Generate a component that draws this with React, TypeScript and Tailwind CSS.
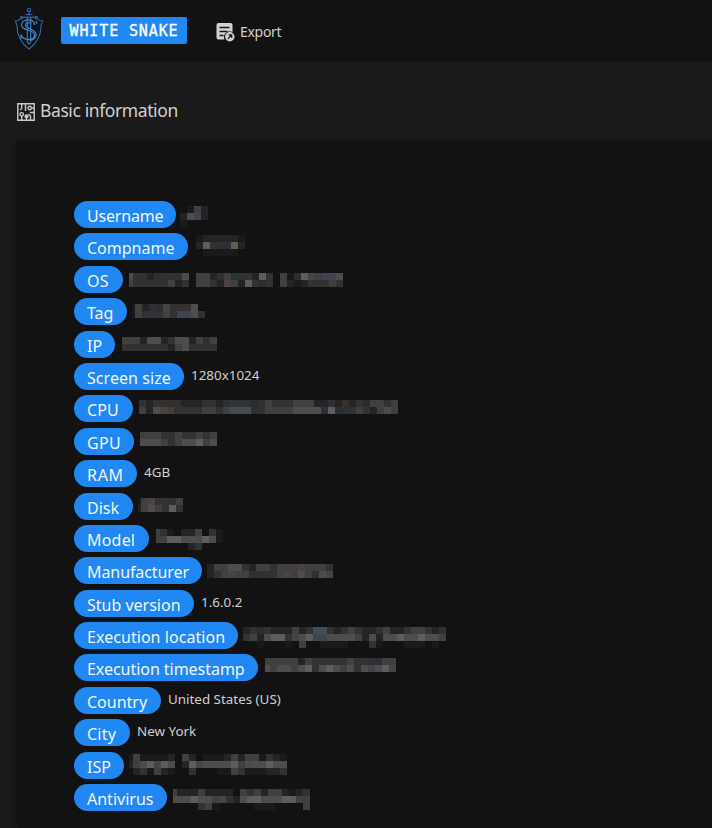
import React from "react";

type Mosaic = {
  gap: string;
  top: string;
  lead?: string;
  rows: string[];
};

type Row = {
  label: string;
  width: string;
  tracking?: string;
  value?: string;
  mosaic?: Mosaic;
};

const shades: Record<string, string> = {
  "0": "bg-transparent",
  "1": "bg-[#1b1b1b]",
  "2": "bg-[#272727]",
  "3": "bg-[#363636]",
  "4": "bg-[#454545]",
  "5": "bg-[#545454]",
  "6": "bg-[#666666]",
  b: "bg-[#30343c]",
  B: "bg-[#464a55]",
  t: "bg-[#2b3235]",
  T: "bg-[#4a5558]",
  r: "bg-[#3b3331]",
  R: "bg-[#534946]",
  y: "bg-[#39352f]",
  Y: "bg-[#676761]",
};

const rows: Row[] = [
  { label: "Username", width: "w-[102px]", tracking: "tracking-[-0.2px]", mosaic: { gap: "ml-[4px]", top: "mt-[5px]", rows: ["0142", "25B2", "1000"] } },
  { label: "Compname", width: "w-[114px]", mosaic: { gap: "ml-[8px]", top: "mt-[2px]", rows: ["1222221", "2Y3bbY2", "0111110"] } },
  { label: "OS", width: "w-[49px]", tracking: "tracking-[0.3px]", mosaic: { gap: "ml-[6px]", top: "mt-[7px]", lead: "w-[4px]", rows: ["T332b33350442r4b332Y3041t6R4BB5", "43333342304432R42Y3t30421233343"] } },
  { label: "Tag", width: "w-[53px]", mosaic: { gap: "ml-[5px]", top: "mt-[6px]", lead: "w-[3px]", rows: ["142btRbr350", "143334yBB5r"] } },
  { label: "IP", width: "w-[41px]", mosaic: { gap: "ml-[7px]", top: "mt-[6px]", lead: "w-[4px]", rows: ["44425523T524r4", "33333332453333"] } },
  { label: "Screen size", width: "w-[110px]", tracking: "tracking-[0.06px]", value: "1280x1024" },
  { label: "CPU", width: "w-[59px]", tracking: "tracking-[0.1px]", mosaic: { gap: "ml-[6px]", top: "mt-[5px]", rows: ["323yrr222332b333tr4y3344422b2r23t4434", "425R4333344b4TTTbb44445555b6tb34r2454"] } },
  { label: "GPU", width: "w-[60px]", tracking: "tracking-[0.3px]", mosaic: { gap: "ml-[6px]", top: "mt-[4px]", rows: ["4443343y434", "5554b455645"] } },
  { label: "RAM", width: "w-[63px]", tracking: "tracking-[0.7px]", value: "4GB" },
  { label: "Disk", width: "w-[59px]", mosaic: { gap: "ml-[5px]", top: "mt-[5px]", lead: "w-[3px]", rows: ["14R33b4", "2454363"] } },
  { label: "Model", width: "w-[75px]", tracking: "tracking-[0.2px]", mosaic: { gap: "ml-[7px]", top: "mt-[4px]", lead: "w-[4px]", rows: ["4310224031", "446655T651", "0000023000"] } },
  { label: "Manufacturer", width: "w-[128px]", tracking: "tracking-[-0.08px]", mosaic: { gap: "ml-[5px]", top: "mt-[7px]", rows: ["2445532443444R4443", "234R44bby34R454b5R"] } },
  { label: "Stub version", width: "w-[120px]", mosaic: undefined, value: "1.6.0.2" },
  { label: "Execution location", width: "w-[164px]", tracking: "tracking-[0.05px]", mosaic: { gap: "ml-[5px]", top: "mt-[5px]", rows: ["23t3222423TT3234322342234432b", "3425663R56BB55554252556556554", "00100010400111100031000111010"] } },
  { label: "Execution timestamp", width: "w-[184px]", tracking: "tracking-[-0.04px]", mosaic: { gap: "ml-[7px]", top: "mt-[4px]", lead: "w-[5px]", rows: ["4444424333334333b44", "545545635654535B56R"] } },
  { label: "Country", width: "w-[87px]", value: "United States (US)" },
  { label: "City", width: "w-[56px]", tracking: "tracking-[0.25px]", value: "New York" },
  { label: "ISP", width: "w-[50px]", mosaic: { gap: "ml-[5px]", top: "mt-[2px]", lead: "w-[4px]", rows: ["14111120420111242441321", "2456R65026R555564T55655", "02314210030001143111223"] } },
  { label: "Antivirus", width: "w-[93px]", mosaic: { gap: "ml-[6px]", top: "mt-[5px]", lead: "w-[4px]", rows: ["42224222204342442123", "5556554R325665556644", "00003410000011100004"] } },
];

function Redacted({ data }: { data: Mosaic }) {
  return (
    <div className={`${data.gap} ${data.top} flex flex-col opacity-90`}>
      {data.rows.map((line, y) => (
        <div key={y} className="flex h-[7px]">
          {line.split("").map((c, x) => (
            <span key={x} className={`h-full ${x === 0 && data.lead ? data.lead : "w-[7px]"} ${shades[c]}`} />
          ))}
        </div>
      ))}
    </div>
  );
}

function Logo() {
  return (
    <svg width="30" height="44" viewBox="0 0 30 44" fill="none" stroke="#2f6ba6" strokeWidth="1.1">
      <circle cx="15" cy="3" r="1.700" />
      <path d="M15 4.700v4M11.500 7.500h7" />
      <path d="M8.500 9.500H7c-.7 3-3 4.500-5.500 4.500.5 2.500 1.500 3 1.500 5C3 29 7 36 15 42c8-6 12-13 12-23 0-2 1-2.500 1.500-5-2.500 0-4.800-1.500-5.500-4.500h-1.500" />
      <path d="M8 10.200h14v2.500M8 10.200v2.500M13.300 11v24l1.700 2 1.700-2V11" stroke="#3880c8" />
      <path d="M20.500 18c0-3.500-3-5-6-5-4.500 0-7 2.300-7 5 0 6 13 4.500 13 10 0 3-3 4.500-6 4.500-4 0-6.500-2-7.500-5M22.500 17v-3M7 32v-4M17.500 16c-3.500-1-6 0-6 2 0 4 10.500 4 10.500 9.500 0 3-2 5-5 6" stroke="#3880c8" strokeWidth="1.3" />
    </svg>
  );
}

function ExportIcon() {
  return (
    <svg width="19" height="19" viewBox="0 0 19 19" fill="none">
      <path d="M2.500 0h12A2 2 0 0 1 16.500 2v7.200A5.700 5.700 0 0 0 8.500 16.500H2.500a2 2 0 0 1-2-2V2a2 2 0 0 1 2-2Z" fill="#d2d2d2" />
      <path d="M3.500 4.500h10M3.500 8.500h8M3.500 12.500h4" stroke="#151515" strokeWidth="1.700" />
      <circle cx="13.800" cy="13.800" r="4.700" fill="#d2d2d2" />
      <path d="m11.800 15.800 3.800-3.800M12.500 11.900h3.200v3.200" stroke="#151515" strokeWidth="1.200" />
    </svg>
  );
}

function CircuitIcon() {
  return (
    <svg width="18" height="18" viewBox="0 0 18 18" fill="none" stroke="#cbcbcb" strokeWidth="1.400">
      <path d="M.8.8h16.400v16.400H.8zM4.700 1v4.500L3 7M8.500 1v7M14.500 5H17M4.700 13v4M9.500 14v3M13.500 17v-4l-2-2M17 9.500h-4" />
      <circle cx="12.700" cy="5" r="1.700" />
      <circle cx="4.700" cy="11.300" r="1.700" />
      <circle cx="9.500" cy="13.300" r="1.400" fill="#cbcbcb" />
    </svg>
  );
}

export default function App() {
  return (
    <div className="flex h-[828px] w-[712px] flex-col overflow-hidden bg-[#1a1a1a] font-['Noto_Sans','Open_Sans',sans-serif] text-[#d0d0d0]">
      <header className="flex h-[62px] shrink-0 items-start bg-[#121212]">
        <div className="ml-[14px] mt-[7px]"><Logo /></div>
        <div className="ml-[17px] mt-[17px] flex h-[27px] w-[126px] items-center justify-center rounded-[2px] bg-[#2188f3] pt-[2px] font-['DejaVu_Sans_Mono',monospace] text-[15px] tracking-[0.87px] text-white [-webkit-text-stroke:0.35px_white]">
          <span className="whitespace-nowrap">WHITE SNAKE</span>
        </div>
        <div className="ml-[29px] mt-[23px] flex">
          <ExportIcon />
          <span className="-mt-[1px] ml-[5px] text-[14px] leading-[19px] tracking-[-0.3px]">Export</span>
        </div>
      </header>
      <div className="flex h-[79px] shrink-0 items-start pl-[17px] pt-[41px]">
        <CircuitIcon />
        <h1 className="-mt-[6px] ml-[5px] whitespace-nowrap text-[17.5px] leading-[26px] tracking-[-0.4px]">Basic information</h1>
      </div>
      <main className="ml-[17px] flex grow flex-col bg-[#121212] pl-[57px] pt-[60px] shadow-[0_0_5px_#121212]">
        {rows.map((row) => (
          <div key={row.label} className="flex h-[32.4px] shrink-0 items-start">
            <div className={`${row.width} flex h-[27px] shrink-0 justify-start rounded-full bg-[#2188f3] pl-[13px] text-[16px] leading-[30px] text-[#f0f6fc]`}>
              <span className={`whitespace-nowrap ${row.tracking ?? ""}`}>{row.label}</span>
            </div>
            {row.value && <span className="ml-[7px] whitespace-nowrap text-[13.4px] leading-[25.500px]">{row.value}</span>}
            {row.mosaic && <Redacted data={row.mosaic} />}
          </div>
        ))}
      </main>
    </div>
  );
}
